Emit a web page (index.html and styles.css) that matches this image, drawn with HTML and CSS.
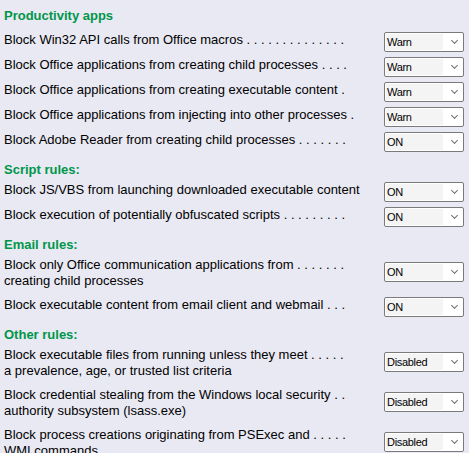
FILE: index.html
```html
<!DOCTYPE html>
<html lang="en">
  <head>
    <meta charset="UTF-8" />
    <meta name="viewport" content="width=device-width, initial-scale=1.0" />
    <title>Attack surface reduction rules</title>
    <link rel="stylesheet" href="styles.css">
  </head>
  <body>
    <div class="panel">

      <div class="group first">
        <h2 class="group-title">Productivity apps</h2>
        <div class="rule">
          <span class="rule-name">Block Win32 API calls from Office macros . . . . . . . . . . . . . .</span>
          <div class="combo"><span class="combo-value">Warn</span><span class="combo-arrow"></span></div>
        </div>
        <div class="rule">
          <span class="rule-name">Block Office applications from creating child processes . . . .</span>
          <div class="combo"><span class="combo-value">Warn</span><span class="combo-arrow"></span></div>
        </div>
        <div class="rule">
          <span class="rule-name">Block Office applications from creating executable content .</span>
          <div class="combo"><span class="combo-value">Warn</span><span class="combo-arrow"></span></div>
        </div>
        <div class="rule">
          <span class="rule-name">Block Office applications from injecting into other processes .</span>
          <div class="combo"><span class="combo-value">Warn</span><span class="combo-arrow"></span></div>
        </div>
        <div class="rule">
          <span class="rule-name">Block Adobe Reader from creating child processes . . . . . . .</span>
          <div class="combo"><span class="combo-value">ON</span><span class="combo-arrow"></span></div>
        </div>
      </div>

      <div class="group">
        <h2 class="group-title">Script rules:</h2>
        <div class="rule">
          <span class="rule-name">Block JS/VBS from launching downloaded executable content</span>
          <div class="combo"><span class="combo-value">ON</span><span class="combo-arrow"></span></div>
        </div>
        <div class="rule">
          <span class="rule-name">Block execution of potentially obfuscated scripts . . . . . . . . .</span>
          <div class="combo"><span class="combo-value">ON</span><span class="combo-arrow"></span></div>
        </div>
      </div>

      <div class="group">
        <h2 class="group-title">Email rules:</h2>
        <div class="rule is-tall">
          <span class="rule-name">Block only Office communication applications from . . . . . . .<br>creating child processes</span>
          <div class="combo"><span class="combo-value">ON</span><span class="combo-arrow"></span></div>
        </div>
        <div class="rule">
          <span class="rule-name">Block executable content from email client and webmail . . .</span>
          <div class="combo"><span class="combo-value">ON</span><span class="combo-arrow"></span></div>
        </div>
      </div>

      <div class="group">
        <h2 class="group-title">Other rules:</h2>
        <div class="rule is-tall">
          <span class="rule-name">Block executable files from running unless they meet . . . . .<br>a prevalence, age, or trusted list criteria</span>
          <div class="combo"><span class="combo-value">Disabled</span><span class="combo-arrow"></span></div>
        </div>
        <div class="rule is-tall">
          <span class="rule-name">Block credential stealing from the Windows local security . .<br>authority subsystem (lsass.exe)</span>
          <div class="combo"><span class="combo-value">Disabled</span><span class="combo-arrow"></span></div>
        </div>
        <div class="rule is-tall">
          <span class="rule-name">Block process creations originating from PSExec and . . . . .<br>WMI commands</span>
          <div class="combo"><span class="combo-value">Disabled</span><span class="combo-arrow"></span></div>
        </div>
      </div>

    </div>
  </body>
</html>
```

FILE: styles.css
```css
* {
  box-sizing: border-box;
  margin: 0;
  padding: 0;
}
html {
  overflow: hidden;
}
body {
  background: #e9e9f3;
  color: #000;
  font: 13px/16px "Liberation Sans", Arial, sans-serif;
}
.panel {
  padding: 8px 5px 0 4px;
}

.group {
  margin-top: 5px;
}
.group.first {
  margin-top: 0;
}
.group-title {
  margin-bottom: 4px;
  font: 700 13px/16px "Liberation Sans", Arial, sans-serif;
  color: #00964a;
}
.group.first .group-title {
  margin-bottom: 8px;
}

/* label on the left, drop down pinned to the right */
.rule {
  display: flex;
  align-items: flex-start;
  justify-content: space-between;
  height: 25px;
}
.rule.is-tall {
  height: 40px;
}
.rule.is-tall .combo {
  margin-top: 5px;
}
.rule-name {
  white-space: nowrap;
}

/* windows-style drop down list */
.combo {
  display: flex;
  align-items: center;
  width: 80px;
  height: 20px;
  padding: 1px;
  border: 1px solid #7a7a7a;
  border-radius: 2px;
  background: #fff;
  flex-shrink: 0;
}
.combo-value {
  width: 57px;
  height: 16px;
  padding-left: 1px;
  background: #f4f4f4;
  font-size: 11px;
  line-height: 16px;
  letter-spacing: -0.3px;
}
.combo-arrow {
  width: 5px;
  height: 5px;
  margin: -3px 0 0 9px;
  border-right: 1px solid #6e6e6e;
  border-bottom: 1px solid #6e6e6e;
  transform: rotate(45deg);
}
```
